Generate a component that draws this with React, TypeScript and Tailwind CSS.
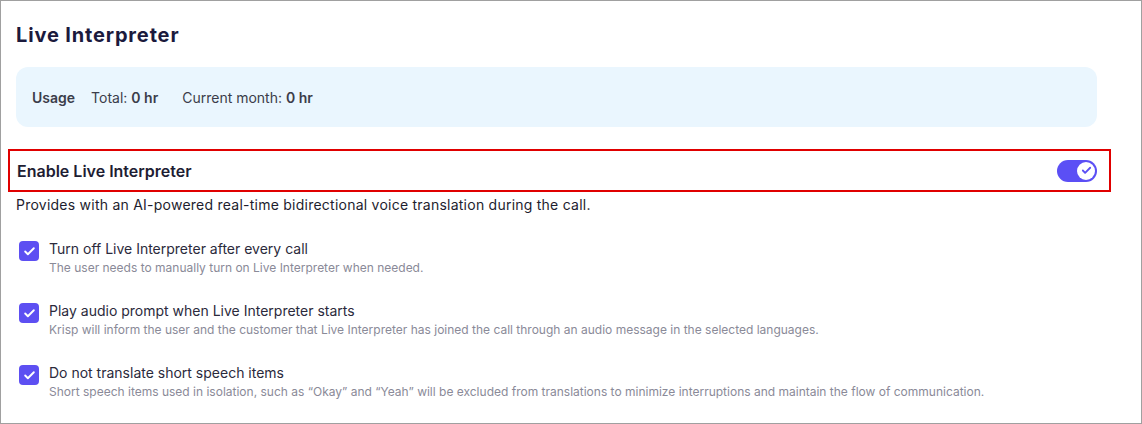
import { Check } from "lucide-react";

const options = [
  {
    title: "Turn off Live Interpreter after every call",
    hint: "The user needs to manually turn on Live Interpreter when needed.",
  },
  {
    title: "Play audio prompt when Live Interpreter starts",
    hint: "Krisp will inform the user and the customer that Live Interpreter has joined the call through an audio message in the selected languages.",
  },
  {
    title: "Do not translate short speech items",
    hint: "Short speech items used in isolation, such as \u201cOkay\u201d and \u201cYeah\u201d will be excluded from translations to minimize interruptions and maintain the flow of communication.",
  },
];

function Toggle() {
  return (
    <div className="flex h-[22px] w-[40px] items-center justify-end rounded-full bg-[#5b4ff5] px-[2px]">
      <div className="flex h-[18px] w-[18px] items-center justify-center rounded-full bg-white">
        <Check size={11} strokeWidth={4} className="text-[#5b4ff5]" />
      </div>
    </div>
  );
}

function Box() {
  return (
    <div className="mt-[2px] flex h-[20px] w-[20px] shrink-0 items-center justify-center rounded-[4px] bg-[#5d4ff2]">
      <Check size={13} strokeWidth={3.5} className="text-white" />
    </div>
  );
}

export default function App() {
  return (
    <div className="h-[424px] w-[1142px] overflow-hidden border border-[#a0a0a0] bg-white font-['Inter',sans-serif] text-[#1e1d33]">
      <div className="pl-[15px] pr-[44px] pt-[21px]">
        <h1 className="text-[20px] font-bold leading-[26px] tracking-[0.85px] text-[#1b1a3d]">Live Interpreter</h1>

        <div className="mt-[19px] flex h-[60px] items-center gap-[16px] rounded-[12px] bg-[#eaf6fe] px-[16px] text-[14px] text-[#3b3d4a]">
          <span className="font-semibold">Usage</span>
          <span>
            Total: <b className="font-semibold">0 hr</b>
          </span>
          <span className="ml-[8px]">
            Current month: <b className="font-semibold">0 hr</b>
          </span>
        </div>
      </div>

      <div className="ml-[7px] mr-[30px] mt-[22px] flex h-[43px] items-center justify-between border-2 border-[#e00000] pl-[7px] pr-[12px]">
        <span className="text-[16px] font-semibold text-[#1e1d33]">Enable Live Interpreter</span>
        <Toggle />
      </div>

      <div className="px-[15px]">
        <p className="mt-[3px] text-[14px] leading-[20px] tracking-[0.24px] text-[#1e1d2e]">
          Provides with an AI-powered real-time bidirectional voice translation during the call.
        </p>

        <div className="mt-[24px] flex flex-col gap-[24px] pl-[3px]">
          {options.map((o) => (
            <div key={o.title} className="flex gap-[10px]">
              <Box />
              <div>
                <div className="text-[14px] leading-[20px] text-[#2b2a3c]">{o.title}</div>
                <div className="text-[12px] leading-[18px] text-[#8a8a98]">{o.hint}</div>
              </div>
            </div>
          ))}
        </div>
      </div>
    </div>
  );
}
